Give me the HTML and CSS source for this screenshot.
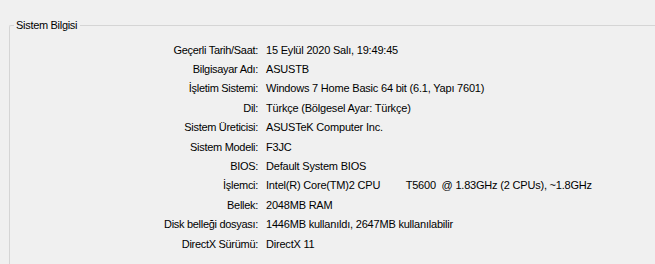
FILE: index.html
```html
<!DOCTYPE html>
<html lang="tr">
<head>
    <meta charset="UTF-8">
    <meta name="viewport" content="width=device-width, initial-scale=1.0">
    <title>Sistem Bilgisi</title>
    <link rel="stylesheet" href="styles.css">
</head>
<body>
    <fieldset class="group">
        <legend>Sistem Bilgisi</legend>
        <div class="info">
            <div class="label">Geçerli Tarih/Saat:</div>
            <div class="value">15 Eylül 2020 Salı, 19:49:45</div>

            <div class="label">Bilgisayar Adı:</div>
            <div class="value">ASUSTB</div>

            <div class="label">İşletim Sistemi:</div>
            <div class="value">Windows 7 Home Basic 64 bit (6.1, Yapı 7601)</div>

            <div class="label">Dil:</div>
            <div class="value">Türkçe (Bölgesel Ayar: Türkçe)</div>

            <div class="label">Sistem Üreticisi:</div>
            <div class="value">ASUSTeK Computer Inc.</div>

            <div class="label">Sistem Modeli:</div>
            <div class="value">F3JC</div>

            <div class="label">BIOS:</div>
            <div class="value">Default System BIOS</div>

            <div class="label">İşlemci:</div>
            <div class="value">Intel(R) Core(TM)2 CPU         T5600  @ 1.83GHz (2 CPUs), ~1.8GHz</div>

            <div class="label">Bellek:</div>
            <div class="value">2048MB RAM</div>

            <div class="label">Disk belleği dosyası:</div>
            <div class="value">1446MB kullanıldı, 2647MB kullanılabilir</div>

            <div class="label">DirectX Sürümü:</div>
            <div class="value">DirectX 11</div>
        </div>
    </fieldset>
</body>
</html>
```

FILE: styles.css
```css
* {
    box-sizing: border-box;
}
html, body {
    margin: 0;
    padding: 0;
    height: 100%;
    overflow: hidden;
}
body {
    background: #f0f0f0;
    color: #000000;
    font-family: 'Liberation Sans', Arial, sans-serif;
    font-size: 11px;
    letter-spacing: -0.3px;
    padding: 18px 0 0 9px;
}
/* group box runs off the right and bottom edge, so only top/left borders show */
.group {
    width: 100%;
    height: 100%;
    margin: 0;
    padding: 8px 0 0 4px;
    border: 1px solid #d5d5d5;
    border-right: none;
    border-bottom: none;
    border-radius: 2px 0 0 0;
}
.group legend {
    padding: 0 3px 0 2px;
    line-height: 14px;
}
.info {
    display: grid;
    grid-template-columns: 244px auto;
    column-gap: 8px;
    grid-auto-rows: 19.4px;
    align-items: center;
}
.label {
    text-align: right;
    white-space: nowrap;
}
.value {
    white-space: pre;
    letter-spacing: -0.2px;
}
```
